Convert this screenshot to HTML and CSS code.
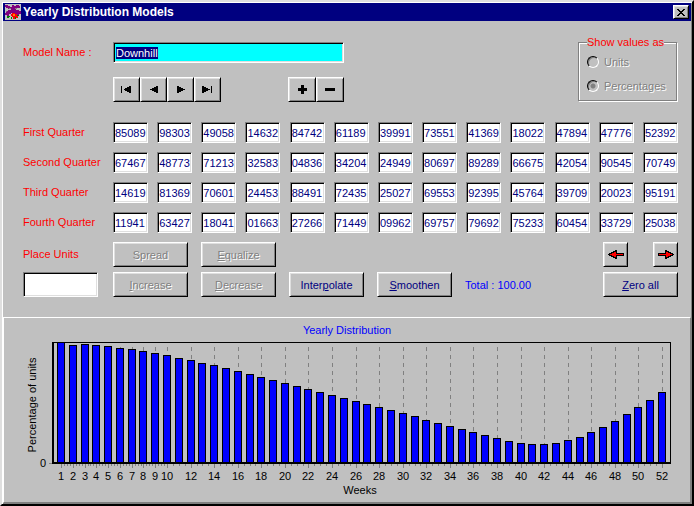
FILE: index.html
```html
<!DOCTYPE html>
<html lang="en">

<head>
    <meta charset="UTF-8">
    <meta name="viewport" content="width=device-width, initial-scale=1.0">
    <title>Yearly Distribution Models</title>
    <link rel="stylesheet" href="styles.css">
</head>

<body>
    <div class="window">
        <header class="titlebar">
            <svg class="app-icon" width="16" height="16" viewBox="0 0 16 16" shape-rendering="crispEdges">
                <rect width="16" height="16" fill="#c0c0c0" />
                <path fill="#800080" d="M0 1h3v1h2v1h2v-2h2v1h2v-1h3v1h1v2h-3v1h-9v-1h-2v-1h-1z" />
                <path fill="#800080" d="M3 6h3v-1h5v1h3v1h2v3h-2v1h-2v-1h-2v-1h-4v1h-2v2h-2v-1h-2v-2h1v-2h2z" />
                <path fill="#808080" d="M4 4h2v1h-2zM10 4h2v1h-2zM1 7h1v1h-1z" />
                <path fill="#ff0000" d="M7 9h3v1h2v2h1v2h-2v-1h-1v2h-2v-2h-1v-1h-1v-2h1z" />
                <path fill="#008000" d="M2 12h3v1h-1v1h-2zM12 11h2v1h-2zM6 13h1v2h-1zM10 13h1v2h-1z" />
                <path fill="#ff8000" d="M8 10h2v2h-2z" />
            </svg>
            <h1>Yearly Distribution Models</h1>
            <button class="close-btn" aria-label="Close">
                <svg width="8" height="7" viewBox="0 0 8 7" shape-rendering="crispEdges">
                    <path d="M0 0h2v1h1v1h2v-1h1v-1h2v1h-1v1h-1v1h-1v1h1v1h1v1h1v1h-2v-1h-1v-1h-2v1h-1v1h-2v-1h1v-1h1v-1h1v-1h-1v-1h-1v-1h-1z" />
                </svg>
            </button>
        </header>

        <main class="form">
            <section class="model">
                <label class="caption" for="model-name">Model Name :</label>
                <div class="model-main">
                    <input class="field model-name" id="model-name" type="text" value="Downhill">
                    <div class="toolbar">
                        <div class="btn-group">
                            <button class="btn nav-btn" aria-label="First">
                                <svg width="11" height="7" viewBox="0 0 11 7" shape-rendering="crispEdges">
                                    <path d="M0 0h1v7h-1zM10 0v7h-2v-1h-2v-1h-2v-1h-1v-1h1v-1h2v-1h2v-1z" />
                                </svg>
                            </button>
                            <button class="btn nav-btn" aria-label="Previous">
                                <svg width="8" height="7" viewBox="0 0 8 7" shape-rendering="crispEdges">
                                    <path d="M8 0v7h-2v-1h-2v-1h-2v-1h-2v-1h2v-1h2v-1h2v-1z" />
                                </svg>
                            </button>
                            <button class="btn nav-btn" aria-label="Next">
                                <svg width="8" height="7" viewBox="0 0 8 7" shape-rendering="crispEdges">
                                    <path d="M0 0v7h2v-1h2v-1h2v-1h2v-1h-2v-1h-2v-1h-2v-1z" />
                                </svg>
                            </button>
                            <button class="btn nav-btn" aria-label="Last">
                                <svg width="11" height="7" viewBox="0 0 11 7" shape-rendering="crispEdges">
                                    <path d="M9 0h1v7h-1zM0 0v7h2v-1h2v-1h2v-1h2v-1h-2v-1h-2v-1h-2v-1z" />
                                </svg>
                            </button>
                        </div>
                        <div class="btn-group">
                            <button class="btn edit-btn" aria-label="Add">
                                <svg width="9" height="9" viewBox="0 0 9 9" shape-rendering="crispEdges">
                                    <path d="M3 0h3v3h3v3h-3v3h-3v-3h-3v-3h3z" />
                                </svg>
                            </button>
                            <button class="btn edit-btn" aria-label="Delete">
                                <svg width="10" height="3" viewBox="0 0 10 3" shape-rendering="crispEdges">
                                    <path d="M0 0h10v3h-10z" />
                                </svg>
                            </button>
                        </div>
                    </div>
                </div>
                <fieldset class="show-as" disabled>
                    <legend>Show values as</legend>
                    <label><input type="radio" name="show"> Units</label>
                    <label><input type="radio" name="show" checked> Percentages</label>
                </fieldset>
            </section>

            <section class="quarters"></section>

            <section class="actions">
                <div class="row">
                    <label class="caption" for="place-units">Place Units</label>
                    <div class="row-main">
                        <button class="btn" disabled>Spread</button>
                        <button class="btn" disabled><u>E</u>qualize</button>
                        <div class="arrows">
                            <button class="btn arrow-btn" aria-label="Shift left">
                                <svg width="16" height="9" viewBox="0 0 16 9" shape-rendering="crispEdges">
                                    <path d="M0 4h1v-1h2v-1h2v-1h2v-1h2v3h7v3h-7v3h-2v-1h-2v-1h-2v-1h-2v-1h-1z" />
                                    <path fill="#ff0000" d="M2 4h2v-1h2v-1h2v2h7v1h-7v2h-2v-1h-2v-1h-2z" />
                                </svg>
                            </button>
                            <button class="btn arrow-btn" aria-label="Shift right">
                                <svg width="16" height="9" viewBox="0 0 16 9" shape-rendering="crispEdges">
                                    <path d="M16 4h-1v-1h-2v-1h-2v-1h-2v-1h-2v3h-7v3h7v3h2v-1h2v-1h2v-1h2v-1h1z" />
                                    <path fill="#ff0000" d="M14 4h-2v-1h-2v-1h-2v2h-7v1h7v2h2v-1h2v-1h2z" />
                                </svg>
                            </button>
                        </div>
                    </div>
                </div>
                <div class="row">
                    <input class="field place-units" id="place-units" type="text">
                    <div class="row-main">
                        <button class="btn" disabled><u>I</u>ncrease</button>
                        <button class="btn" disabled><u>D</u>ecrease</button>
                        <button class="btn">Inter<u>p</u>olate</button>
                        <button class="btn"><u>S</u>moothen</button>
                        <span class="total">Total : 100.00</span>
                        <button class="btn zero-btn"><u>Z</u>ero all</button>
                    </div>
                </div>
            </section>
        </main>

        <section class="chart-panel">
            <svg class="chart" viewBox="0 0 686 184" role="img" aria-label="Yearly Distribution"></svg>
        </section>
    </div>

    <script>
        const quarters = [
            ['First Quarter', '85089 98303 49058 14632 84742 61189 39991 73551 41369 18022 47894 47776 52392'],
            ['Second Quarter', '67467 48773 71213 32583 04836 34204 24949 80697 89289 66675 42054 90545 70749'],
            ['Third Quarter', '14619 81369 70601 24453 88491 72435 25027 69553 92395 45764 39709 20023 95191'],
            ['Fourth Quarter', '11941 63427 18041 01663 27266 71449 09962 69757 79692 75233 60454 33729 25038']
        ];

        const quartersBox = document.querySelector('.quarters');
        quarters.forEach(function ([name, values], q) {
            let cells = '';
            values.split(' ').forEach(function (value, i) {
                const week = q * 13 + i + 1;
                cells += `<input class="field" id="week-${week}" type="text" value="${value}" aria-label="Week ${week}">`;
            });
            quartersBox.innerHTML += `<div class="row"><label class="caption" for="week-${q * 13 + 1}">${name}</label><div class="weeks">${cells}</div></div>`;
        });

        // bar heights, week 1 to 52
        const bars = [
            121, 118, 119, 118, 117, 115, 114, 112, 110, 108, 105, 103, 100,
            98, 95, 92, 89, 86, 83, 80, 77, 74, 71, 68, 65, 62,
            59, 56, 53, 50, 47, 43, 40, 37, 34, 31, 28, 25, 22,
            20, 19, 19, 20, 23, 26, 31, 36, 42, 49, 56, 63, 71
        ];
        const left = 48;
        const right = 667;
        const top_ = 24;
        const base = 145;
        const first = 57;
        const step = 601 / 51;

        function weekX(week) {
            return Math.round(first + (week - 1) * step);
        }

        let grid = '';
        let ticks = '';
        let columns = '';
        let labels = '';
        bars.forEach(function (height, i) {
            const week = i + 1;
            const x = weekX(week);
            if (week <= 10 || week % 2 == 0) {
                grid += `<path class="grid-line" d="M${x} ${top_ + 5}V${base}"/>`;
                ticks += `<rect x="${x}" y="${base}" width="1" height="5"/>`;
                labels += `<text x="${x}" y="162">${week}</text>`;
                // three minor ticks up to the next label
                const span = week < 10 ? 1 : 2;
                for (let m = 1; m < 4 && week < 52; m++) {
                    ticks += `<rect x="${weekX(week + span * m / 4)}" y="${base}" width="1" height="3"/>`;
                }
            }
            columns += `<rect x="${x - 4}" y="${base - height}" width="8" height="${height}"/>`;
            columns += `<rect class="bar" x="${x - 3}" y="${base - height + 1}" width="6" height="${height - 1}"/>`;
        });

        document.querySelector('.chart').innerHTML = `
            <text class="chart-title" x="343" y="16">Yearly Distribution</text>
            <g class="grid">${grid}</g>
            <g class="ticks">${ticks}<rect x="${left - 3}" y="${base}" width="3" height="1"/></g>
            <g class="columns">${columns}</g>
            <g class="frame">
                <rect x="${left}" y="${top_}" width="${right - left}" height="1"/>
                <rect x="${right - 1}" y="${top_}" width="1" height="${base - top_}"/>
                <rect x="${left}" y="${top_}" width="2" height="${base - top_}"/>
                <rect x="${left}" y="${base - 1}" width="${right - left}" height="2"/>
            </g>
            <g class="labels">${labels}
                <text x="39" y="149">0</text>
                <text x="356" y="176">Weeks</text>
                <text transform="translate(32 87) rotate(-90)">Percentage of units</text>
            </g>`;

        const modelName = document.querySelector('.model-name');
        modelName.focus();
        modelName.select();
    </script>
</body>

</html>
```
FILE: styles.css
```css
* {
    box-sizing: border-box;
}

body {
    margin: 0;
    background-color: #c0c0c0;
    font-family: "Liberation Sans", Arial, sans-serif;
    font-size: 11px;
}

.window {
    min-height: 100vh;
    padding: 1px;
    display: flex;
    flex-direction: column;
    border: 2px solid;
    border-color: #dfdfdf #000000 #000000 #dfdfdf;
    box-shadow: inset 1px 1px 0 #ffffff, inset -1px -1px 0 #808080;
}

/* title bar */

.titlebar {
    height: 18px;
    padding: 0 2px;
    display: flex;
    align-items: center;
    gap: 2px;
    background-color: #000080;
    color: #ffffff;
}

.titlebar h1 {
    flex: 1;
    margin: 0;
    font-size: 12px;
    line-height: 18px;
}

.app-icon {
    display: block;
}

.close-btn,
.btn {
    padding: 0;
    display: flex;
    align-items: center;
    justify-content: center;
    background-color: #c0c0c0;
    border: 1px solid;
    border-color: #ffffff #000000 #000000 #ffffff;
    box-shadow: inset 1px 1px 0 #dfdfdf, inset -1px -1px 0 #808080;
}

.close-btn {
    width: 16px;
    height: 14px;
}

.btn {
    width: 75px;
    height: 25px;
    font-family: inherit;
    font-size: 11px;
    color: #000080;
    white-space: pre;
}

.btn:disabled {
    color: #808080;
    text-shadow: 1px 1px 0 #ffffff;
}

/* inputs */

.form {
    padding: 15px 13px 20px 20px;
}

.caption {
    flex: none;
    width: 90px;
    line-height: 21px;
    color: #ff0000;
}

.field {
    height: 21px;
    padding: 0;
    background-color: #ffffff;
    border: 1px solid;
    border-color: #808080 #ffffff #ffffff #808080;
    box-shadow: inset 1px 1px 0 #000000, inset -1px -1px 0 #dfdfdf;
    border-radius: 0;
    outline: none;
    font-family: inherit;
    font-size: 11px;
    color: #000080;
}

.model {
    display: flex;
    align-items: flex-start;
}

.model .caption {
    margin-top: 6px;
}

.model-main {
    width: 231px;
    padding-top: 6px;
}

.model-name {
    display: block;
    width: 100%;
    padding: 0 2px;
    background-color: #00ffff;
}

.model-name::selection {
    background-color: #000080;
    color: #ffffff;
}

.toolbar {
    margin-top: 14px;
    display: flex;
    justify-content: space-between;
}

.btn-group {
    display: flex;
}

.nav-btn {
    width: 27px;
}

.edit-btn {
    width: 28px;
}

.show-as {
    width: 99px;
    margin: 0 1px 0 auto;
    padding: 2px 8px;
    border: 1px solid #808080;
    box-shadow: 1px 1px 0 #ffffff, inset 1px 1px 0 #ffffff;
    color: #808080;
    text-shadow: 1px 1px 0 #ffffff;
}

.show-as legend {
    padding: 0;
    line-height: 12px;
    background-color: #c0c0c0;
    color: #ff0000;
    text-shadow: none;
}

.show-as label {
    height: 24px;
    display: flex;
    align-items: center;
    gap: 5px;
}

.show-as input {
    appearance: none;
    width: 12px;
    height: 12px;
    margin: 0;
    border: 1px solid;
    border-color: #000000 #ffffff #ffffff #000000;
    border-radius: 50%;
    box-shadow: inset 1px 1px 0 #808080;
}

.show-as input:checked {
    background: radial-gradient(circle, #808080 2px, transparent 3px);
}

/* quarters */

.quarters {
    margin-top: 20px;
    display: flex;
    flex-direction: column;
    gap: 9px;
}

.row {
    display: flex;
}

.weeks {
    flex: 1;
    display: flex;
    justify-content: space-between;
}

.weeks .field {
    width: 35px;
    padding-left: 1px;
}

/* actions */

.actions {
    margin-top: 9px;
    display: flex;
    flex-direction: column;
    gap: 5px;
}

.actions .caption {
    line-height: 25px;
}

.place-units {
    width: 75px;
    height: 25px;
    margin-right: 15px;
}

.row-main {
    flex: 1;
    display: flex;
    align-items: center;
    gap: 13px;
}

.arrows {
    width: 75px;
    margin-left: auto;
    display: flex;
    justify-content: space-between;
}

.arrow-btn {
    width: 25px;
}

.total {
    color: #0000ff;
}

.zero-btn {
    margin-left: auto;
}

/* chart */

.chart-panel {
    flex: 1;
    border: 1px solid;
    border-color: #ffffff #808080 #808080 #ffffff;
}

.chart {
    display: block;
    width: 100%;
    font-size: 11px;
    text-anchor: middle;
    shape-rendering: crispEdges;
}

.chart-title {
    fill: #0000ff;
}

.grid-line {
    stroke: #808080;
    stroke-dasharray: 4 4;
}

.ticks {
    fill: #808080;
}

.bar {
    fill: #0000ff;
}
```
